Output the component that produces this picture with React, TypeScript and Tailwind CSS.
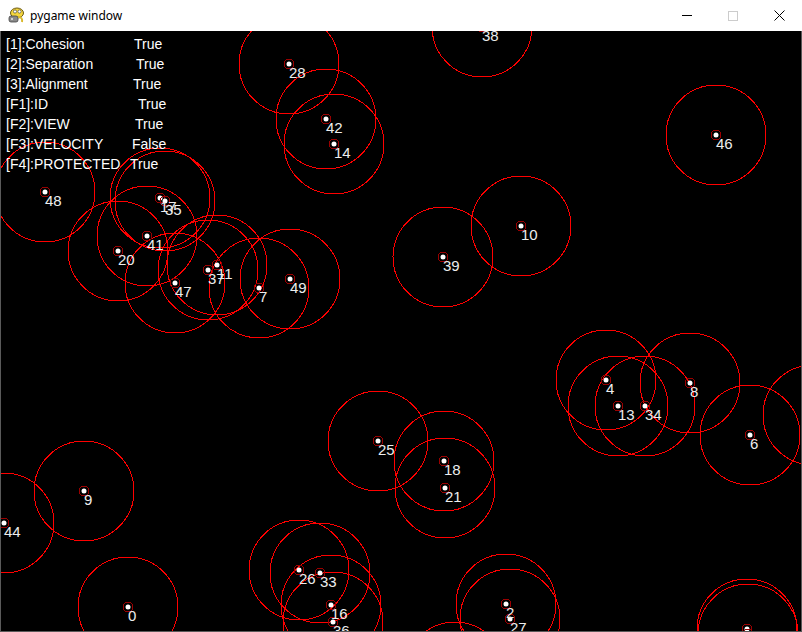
import React from 'react';

type Boid = { id: number; x: number; y: number };

// positions in window pixels (canvas starts at x=1, y=31)
const BOIDS: Boid[] = [
  { id: 38, x: 482, y: 27 },
  { id: 28, x: 289, y: 64 },
  { id: 42, x: 326, y: 119 },
  { id: 14, x: 334, y: 144 },
  { id: 46, x: 716, y: 135 },
  { id: 48, x: 45, y: 192 },
  { id: 17, x: 160, y: 198 },
  { id: 35, x: 165, y: 201 },
  { id: 41, x: 147, y: 236 },
  { id: 20, x: 118, y: 251 },
  { id: 11, x: 217, y: 265 },
  { id: 37, x: 208, y: 270 },
  { id: 47, x: 175, y: 283 },
  { id: 7, x: 259, y: 288 },
  { id: 49, x: 290, y: 279 },
  { id: 10, x: 521, y: 226 },
  { id: 39, x: 443, y: 257 },
  { id: 4, x: 606, y: 380 },
  { id: 13, x: 618, y: 406 },
  { id: 34, x: 645, y: 406 },
  { id: 8, x: 690, y: 383 },
  { id: 6, x: 750, y: 435 },
  { id: 23, x: 813, y: 415 },
  { id: 25, x: 378, y: 441 },
  { id: 18, x: 444, y: 461 },
  { id: 21, x: 445, y: 488 },
  { id: 9, x: 84, y: 491 },
  { id: 44, x: 4, y: 523 },
  { id: 26, x: 299, y: 570 },
  { id: 33, x: 320, y: 573 },
  { id: 16, x: 331, y: 605 },
  { id: 36, x: 333, y: 622 },
  { id: 0, x: 128, y: 607 },
  { id: 2, x: 506, y: 604 },
  { id: 27, x: 510, y: 619 },
  { id: 30, x: 455, y: 672 },
  { id: 19, x: 747, y: 629 },
  { id: 5, x: 748, y: 634 },
];

// only labels whose text starts inside the canvas get drawn
const visible = (b: Boid) => b.x < 795 && b.y < 625;

const OPTIONS = [
  { label: '[1]:Cohesion', value: 'True', w: 'w-[128px]' },
  { label: '[2]:Separation', value: 'True', w: 'w-[130px]' },
  { label: '[3]:Alignment', value: 'True', w: 'w-[127px]' },
  { label: '[F1]:ID', value: 'True', w: 'w-[132px]' },
  { label: '[F2]:VIEW', value: 'True', w: 'w-[129px]' },
  { label: '[F3]:VELOCITY', value: 'False', w: 'w-[126px]' },
  { label: '[F4]:PROTECTED', value: 'True', w: 'w-[124px]' },
];

const PygameIcon = () => (
  <svg width="18" height="18" viewBox="0 0 18 18">
    <ellipse cx="10" cy="7" rx="6.5" ry="5" fill="#f5d63d" stroke="#6b5a14" strokeWidth="1" />
    <circle cx="8" cy="5.5" r="1.6" fill="#fff" stroke="#333" strokeWidth="0.6" />
    <circle cx="12.5" cy="5.5" r="1.6" fill="#fff" stroke="#333" strokeWidth="0.6" />
    <rect x="2" y="10" width="9" height="6" rx="2" fill="#8a8a8a" stroke="#444" strokeWidth="0.8" />
    <circle cx="5" cy="13" r="1" fill="#e9e9e9" />
    <path d="M11 11 Q16 11 15 16" fill="none" stroke="#d9b82a" strokeWidth="2" />
  </svg>
);

const TitleBar = () => (
  <div className="h-[31px] bg-white flex items-center shrink-0">
    <div className="ml-[7px] mt-[-1px]">
      <PygameIcon />
    </div>
    <span className="ml-[5px] text-[12px] text-black" style={{ fontFamily: '"Noto Sans", "Liberation Sans", sans-serif' }}>
      pygame window
    </span>
    <div className="ml-auto flex h-full">
      <div className="w-[46px] h-full flex items-center justify-center">
        <div className="w-[10px] h-px bg-black" />
      </div>
      <div className="w-[46px] h-full flex items-center justify-center">
        <div className="w-[10px] h-[10px] border border-[#cccccc]" />
      </div>
      <div className="w-[46px] h-full flex items-center justify-center">
        <svg width="11" height="11" viewBox="0 0 11 11">
          <path d="M0.5 0.5 L10.5 10.5 M10.5 0.5 L0.5 10.5" stroke="#000" strokeWidth="1" />
        </svg>
      </div>
    </div>
  </div>
);

const Canvas = () => (
  <div className="relative w-[800px] h-[600px] bg-black overflow-hidden">
    <svg width="800" height="600" viewBox="1 31 800 600" className="block">
      {BOIDS.map(b => (
        <circle key={`v${b.id}`} cx={b.x} cy={b.y} r="50" fill="none" stroke="#ff0000" strokeWidth="1" shapeRendering="crispEdges" />
      ))}
      {BOIDS.map(b => (
        <g key={`d${b.id}`}>
          <circle cx={b.x} cy={b.y} r="5" fill="none" stroke="#9a0000" strokeWidth="1" shapeRendering="crispEdges" />
          <circle cx={b.x} cy={b.y} r="2.5" fill="#ffffff" />
        </g>
      ))}
      {BOIDS.filter(visible).map(b => (
        <text
          key={`t${b.id}`}
          x={b.x}
          y={b.y + 14}
          fill="#ededed"
          fontSize="15"
          fontFamily='"Liberation Sans", Arial, sans-serif'
        >
          {b.id}
        </text>
      ))}
    </svg>

    <div
      className="absolute left-[5px] top-[3px] flex flex-col text-[14px] leading-[20px] text-white"
      style={{ fontFamily: '"Liberation Sans", Arial, sans-serif' }}
    >
      {OPTIONS.map(o => (
        <div key={o.label} className="flex whitespace-nowrap">
          <span className={`${o.w} shrink-0`}>{o.label}</span>
          <span>{o.value}</span>
        </div>
      ))}
    </div>
  </div>
);

export default function App() {
  return (
    <div className="w-[802px] h-[632px] flex flex-col bg-white overflow-hidden">
      <TitleBar />
      <div className="border-x border-b border-[#5a5a5a] w-[802px]">
        <Canvas />
      </div>
    </div>
  );
}
